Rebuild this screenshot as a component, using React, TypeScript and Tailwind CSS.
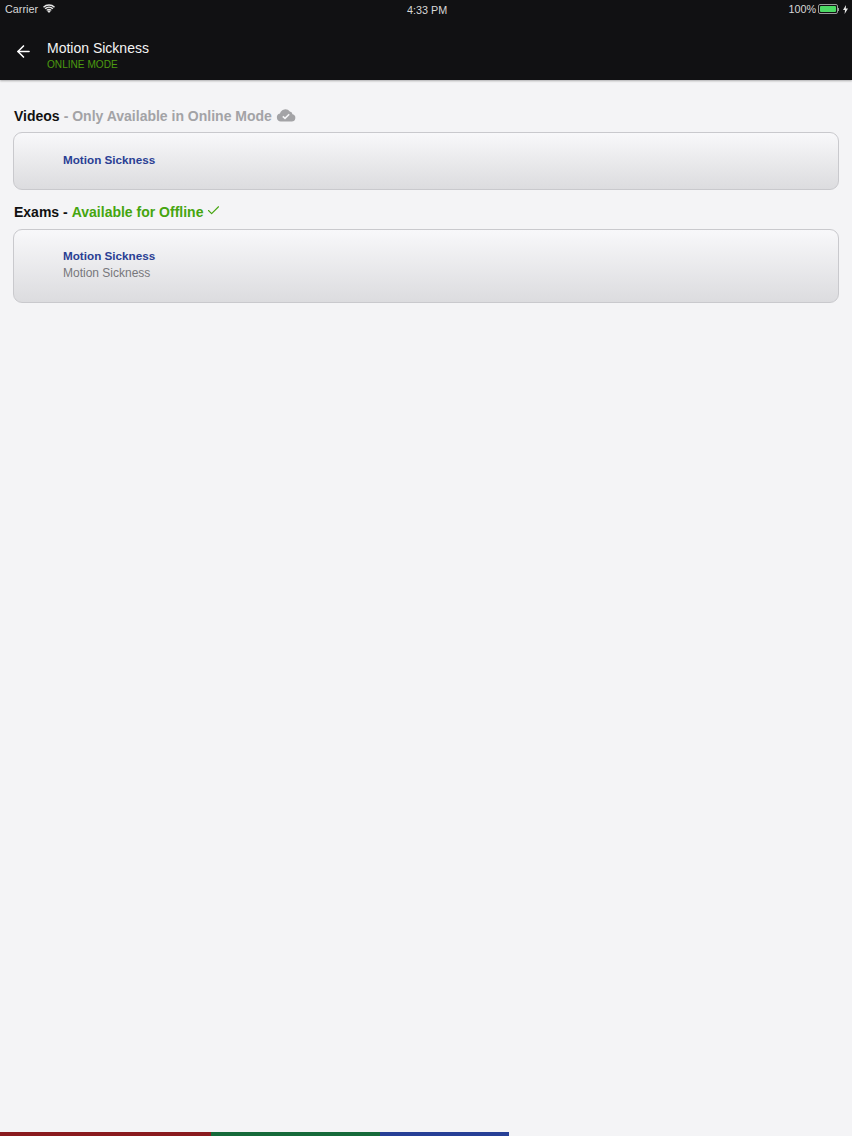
import { ArrowLeft, Check } from "lucide-react";

const font = "font-['Liberation_Sans',Arial,sans-serif]";

const App = () => {
  return (
    <div className={`${font} relative flex h-[1136px] w-[852px] flex-col overflow-hidden bg-[#f4f4f6]`}>
      {/* Status bar + header */}
      <div className="h-[80px] shrink-0 bg-[#111113] text-white shadow-[0_1px_2px_rgba(0,0,0,0.3)]">
        <div className="relative flex h-[18px] items-center justify-between pl-[5px] pr-[4px] text-[10.8px] text-[#d8d8d8]">
          <div className="flex items-center gap-[5px]">
            <span>Carrier</span>
            <svg width="12" height="9" viewBox="0 0 12 9" className="mb-[2px]">
              <path d="M6 9 L4.2 7 A2.6 2.6 0 0 1 7.8 7 Z" fill="#e8e8e8" />
              <path d="M3.2 5.9 A4.2 4.2 0 0 1 8.8 5.9 L7.9 6.8 A3 3 0 0 0 4.1 6.8 Z" fill="#e8e8e8" />
              <path d="M1.6 4.3 A6.4 6.4 0 0 1 10.4 4.3 L9.4 5.3 A5 5 0 0 0 2.6 5.3 Z" fill="#e8e8e8" />
              <path d="M0 2.7 A8.6 8.6 0 0 1 12 2.7 L11 3.7 A7.2 7.2 0 0 0 1 3.7 Z" fill="#e8e8e8" />
            </svg>
          </div>
          <span className="absolute left-[407px] top-[2px]">4:33 PM</span>
          <div className="flex items-center gap-[2px]">
            <span>100%</span>
            <div className="flex items-center">
              <div className="h-[10px] w-[20px] rounded-[2px] border border-[#9a9a9a] p-[1px]">
                <div className="h-full w-full rounded-[1px] bg-[#4cd964]" />
              </div>
              <div className="h-[3px] w-[1px] bg-[#9a9a9a]" />
            </div>
            <svg width="5" height="9" viewBox="0 0 5 9" className="ml-[2px]">
              <path d="M3 0 L0 5 H2 L1.6 9 L5 3.6 H2.8 Z" fill="#e8e8e8" />
            </svg>
          </div>
        </div>
        <div className="flex items-start pl-[14px] pt-[21px]">
          <ArrowLeft className="mt-[3px] h-[19px] w-[19px]" strokeWidth={2} />
          <div className="ml-[14px] flex flex-col">
            <span className="text-[14px] leading-[18px] text-[#f4f4f4]">Motion Sickness</span>
            <span className="mt-[1px] text-[10.1px] leading-[13px] text-[#4c9a10]">ONLINE MODE</span>
          </div>
        </div>
      </div>

      {/* Content */}
      <div className="flex flex-col pl-[13px]">
        <h2 className="mt-[27px] flex h-[18px] items-center pl-[1px] pt-[1px] text-[14px] font-bold text-[#111]">
          Videos
          <span className="ml-[4px] text-[#a3a3a6]">- Only Available in Online Mode</span>
          <svg width="20" height="15" viewBox="0 0 20 15" className="mb-[3px] ml-[4px]">
            <path
              d="M5 13.5 A4 4 0 0 1 4 5.6 A5.5 5.5 0 0 1 13.8 3.6 A3.4 3.4 0 0 1 16.5 6.2 A3.7 3.7 0 0 1 15.6 13.5 Z"
              fill="#a3a3a6"
            />
            <path d="M6.8 8.3 L9 10.4 L13.2 6.2" fill="none" stroke="#f4f4f6" strokeWidth="1.6" />
          </svg>
        </h2>
        <div className="mt-[7px] flex h-[58px] w-[826px] flex-col justify-center rounded-[9px] border border-[#c9c9cd] bg-gradient-to-b from-[#f8f8fa] to-[#dcdcdf] pb-[4px] pl-[49px]">
          <span className="text-[11.7px] font-bold leading-[15px] text-[#2a3f94]">Motion Sickness</span>
        </div>

        <h2 className="mt-[13px] flex h-[18px] items-center pl-[1px] text-[14px] font-bold text-[#111]">
          Exams -
          <span className="ml-[4px] text-[#45a50f]">Available for Offline</span>
          <Check className="mb-[3px] ml-[3px] h-[15px] w-[15px] text-[#45a50f]" strokeWidth={1.8} />
        </h2>
        <div className="mt-[8px] flex h-[74px] w-[826px] flex-col justify-center rounded-[9px] border border-[#c9c9cd] bg-gradient-to-b from-[#f8f8fa] to-[#dcdcdf] pb-[4px] pl-[49px]">
          <span className="text-[11.7px] font-bold leading-[17px] text-[#2a3f94]">Motion Sickness</span>
          <span className="mt-[1px] text-[12px] leading-[17px] text-[#77777b]">Motion Sickness</span>
        </div>
      </div>

      {/* Progress strip */}
      <div className="absolute bottom-0 left-0 flex h-[4px] w-[509px]">
        <div className="w-[211px] bg-[#8a1a1e]" />
        <div className="w-[169px] bg-[#156a3a]" />
        <div className="w-[129px] bg-[#263f96]" />
      </div>
    </div>
  );
};

export default App;
